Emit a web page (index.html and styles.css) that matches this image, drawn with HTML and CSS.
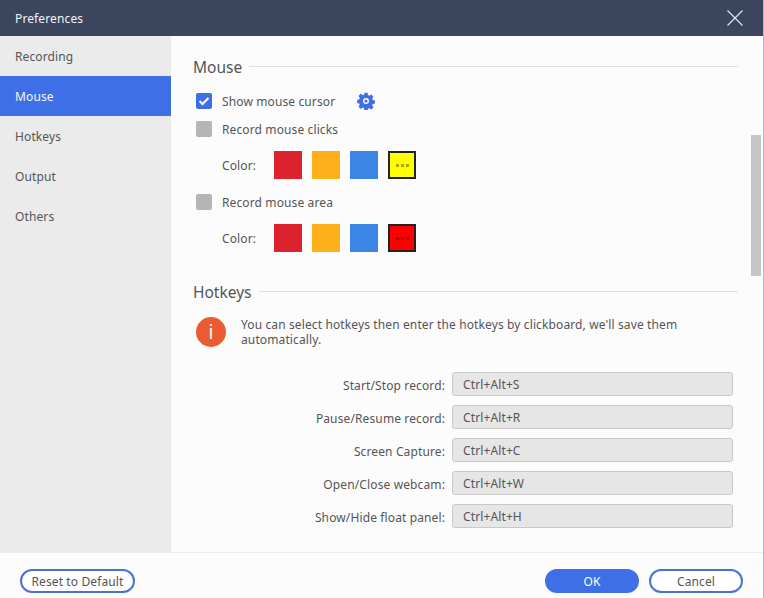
FILE: index.html
```html
<!DOCTYPE html>
<html lang="en">
<head>
<meta charset="utf-8">
<title>Preferences</title>
<link rel="stylesheet" href="styles.css">
</head>
<body>
<div class="window">
  <header class="titlebar">
    <span class="title">Preferences</span>
    <svg class="close" width="16" height="16" viewBox="0 0 16 16"><path d="M.5.5l15 15M15.500.5l-15 15" stroke="#e6e9ef" stroke-width="1.100" fill="none"/></svg>
  </header>
  <div class="body">
    <nav class="sidebar">
      <div class="nav-item">Recording</div>
      <div class="nav-item active">Mouse</div>
      <div class="nav-item">Hotkeys</div>
      <div class="nav-item">Output</div>
      <div class="nav-item">Others</div>
    </nav>
    <main class="content">
      <div class="section-head"><h2>Mouse</h2><span class="rule"></span></div>
      <div class="check-row first">
        <span class="check on"><svg width="12" height="10" viewBox="0 0 12 10"><path d="M1.500 5l3 3 6-6" stroke="#fff" stroke-width="2" fill="none"/></svg></span>
        <span>Show mouse cursor</span>
        <svg class="gear" width="18" height="18" viewBox="0 0 18 18"><path fill="#3f6fe6" fill-rule="evenodd" d="M7.400.8h3.200l.4 2.300 1.300.6 2-1.300 2.200 2.300-1.300 1.900.6 1.400 2.200.4v3.200l-2.200.4-.6 1.300 1.300 2-2.200 2.200-2-1.300-1.300.6-.4 2.200H7.400L7 16.200l-1.300-.6-2 1.300-2.200-2.200 1.300-2-.6-1.300-2-.4V7.800l2-.4.6-1.400-1.300-1.900 2.200-2.300 2 1.300L7 3.100zM9 6a3 3 0 1 0 0 6 3 3 0 0 0 0-6z"/><circle cx="9" cy="9" r="1.600" fill="#3f6fe6"/></svg>
      </div>
      <div class="check-row"><span class="check"></span><span>Record mouse clicks</span></div>
      <div class="color-row">
        <span class="color-label">Color:</span>
        <span class="swatch red"></span><span class="swatch amber"></span><span class="swatch blue"></span>
        <span class="swatch more yellow"><i></i><i></i><i></i></span>
      </div>
      <div class="check-row area"><span class="check"></span><span>Record mouse area</span></div>
      <div class="color-row">
        <span class="color-label">Color:</span>
        <span class="swatch red"></span><span class="swatch amber"></span><span class="swatch blue"></span>
        <span class="swatch more pure-red"><i></i><i></i><i></i></span>
      </div>
      <div class="section-head hotkeys"><h2>Hotkeys</h2><span class="rule"></span></div>
      <div class="notice">
        <span class="info">i</span>
        <p>You can select hotkeys then enter the hotkeys by clickboard, we'll save them automatically.</p>
      </div>
      <div class="keys">
        <label class="key-row"><span>Start/Stop record:</span><span class="field">Ctrl+Alt+S</span></label>
        <label class="key-row"><span>Pause/Resume record:</span><span class="field">Ctrl+Alt+R</span></label>
        <label class="key-row"><span>Screen Capture:</span><span class="field">Ctrl+Alt+C</span></label>
        <label class="key-row"><span>Open/Close webcam:</span><span class="field">Ctrl+Alt+W</span></label>
        <label class="key-row"><span>Show/Hide float panel:</span><span class="field">Ctrl+Alt+H</span></label>
      </div>
      <div class="scrollbar"></div>
    </main>
  </div>
  <footer class="footer">
    <button class="btn reset">Reset to Default</button>
    <span class="spacer"></span>
    <button class="btn ok">OK</button>
    <button class="btn cancel">Cancel</button>
  </footer>
</div>
</body>
</html>
```

FILE: styles.css
```css
* { box-sizing: border-box; }
html, body { margin: 0; padding: 0; }
body {
  width: 764px;
  height: 598px;
  overflow: hidden;
  font-family: "Noto Sans", "DejaVu Sans", sans-serif;
  font-size: 12px;
  letter-spacing: 0.12px;
  color: #555;
}
.window {
  width: 764px;
  height: 598px;
  display: flex;
  flex-direction: column;
  background: #fcfcfd;
  border-right: 1px solid #b4bccb;
}
.titlebar {
  height: 36px;
  flex: none;
  background: #3b465e;
  color: #f2f3f6;
  display: flex;
  align-items: center;
  justify-content: space-between;
  padding: 0 20px 0 15px;
}
.body { flex: 1; display: flex; min-height: 0; }
.sidebar { width: 171px; flex: none; background: #ebebeb; }
.nav-item { height: 40px; line-height: 42px; padding-left: 15px; color: #555; }
.nav-item.active { background: #3f6fe6; color: #f4f6fd; }
.content { flex: 1; position: relative; padding: 0 25px 0 22px; overflow: hidden; }
.section-head { display: flex; align-items: center; gap: 7px; height: 20px; margin-top: 21px; }
.section-head h2 { margin: 0; font-size: 15.500px; font-weight: 400; letter-spacing: 0; color: #555; line-height: 20px; }
.rule { flex: 1; height: 1px; background: #dfdfdf; margin-bottom: 2px; }
.section-head.hotkeys { margin-top: 30px; }
.check-row { display: flex; align-items: center; height: 16px; margin-top: 12px; margin-left: 3px; gap: 10px; }
.check-row.first { margin-top: 16px; }
.check-row.area { margin-top: 15px; }
.check { width: 16px; height: 16px; border-radius: 2px; background: #b5b5b5; display: flex; align-items: center; justify-content: center; }
.check.on { background: #3f6fe6; }
.gear { margin-left: 12px; }
.color-row { display: flex; align-items: center; height: 28px; margin-top: 14px; margin-left: 29px; }
.color-label { width: 52px; padding-top: 1px; }
.swatch { width: 28px; height: 28px; margin-right: 10px; display: flex; align-items: center; justify-content: center; gap: 2px; }
.red { background: #dd2330; }
.amber { background: #feb01a; }
.blue { background: #3b86e4; }
.more { border: 2px solid #222; }
.more i { width: 3px; height: 3px; }
.yellow { background: #ffff00; }
.yellow i { background: #a9a900; }
.pure-red { background: #ff0000; }
.pure-red i { background: #b00000; }
.notice { display: flex; gap: 15px; margin-top: 15px; margin-left: 3px; height: 30px; }
.info { width: 30px; height: 30px; flex: none; border-radius: 50%; background: #ea5b33; color: #fff; font-family: "Liberation Sans", sans-serif; font-size: 20px; display: flex; align-items: center; justify-content: center; }
.notice p { margin: 0; line-height: 15px; width: 480px; }
.keys { margin-top: 25px; display: flex; flex-direction: column; gap: 9px; }
.key-row { display: flex; align-items: center; justify-content: flex-end; gap: 7px; height: 24px; margin-right: 5px; }
.key-row > span:first-child { padding-top: 2px; }
.field { width: 281px; height: 24px; line-height: 24px; padding-left: 10px; background: #e6e6e6; border: 1px solid #c8c8c8; border-radius: 3px; }
.scrollbar { position: absolute; left: 580px; top: 99px; width: 10px; height: 141px; background: #c6c6c6; }
.footer { height: 46px; flex: none; border-top: 1px solid #eeeeee; display: flex; align-items: flex-start; padding: 16px 20px 0 20px; gap: 10px; }
.spacer { flex: 1; }
.btn { height: 24px; border-radius: 12px; font: inherit; letter-spacing: inherit; color: #555; background: #fff; border: 2px solid #4a72cf; padding: 0; }
.reset { width: 115px; }
.ok { width: 94px; background: #3f6fe6; border-color: #3f6fe6; color: #fff; }
.cancel { width: 94px; }
```
